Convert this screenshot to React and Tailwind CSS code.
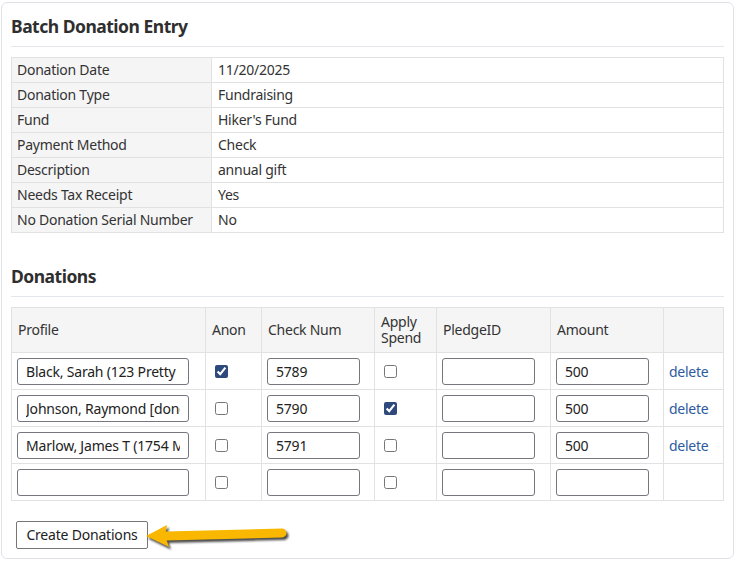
import React from "react";

const info = [
  ["Donation Date", "11/20/2025"],
  ["Donation Type", "Fundraising"],
  ["Fund", "Hiker's Fund"],
  ["Payment Method", "Check"],
  ["Description", "annual gift"],
  ["Needs Tax Receipt", "Yes"],
  ["No Donation Serial Number", "No"],
];

const rows = [
  { profile: "Black, Sarah (123 Pretty Lane, Springfield)", anon: true, check: "5789", spend: false, amount: "500", del: true },
  { profile: "Johnson, Raymond [donor 4412]", anon: false, check: "5790", spend: true, amount: "500", del: true },
  { profile: "Marlow, James T (1754 Maple Street)", anon: false, check: "5791", spend: false, amount: "500", del: true },
  { profile: "", anon: false, check: "", spend: false, amount: "", del: false },
];

const inputCls =
  "h-[27px] border border-[#76767f] rounded-[3px] px-[8px] text-[14px] tracking-[-0.2px] text-[#222] bg-white outline-none";

function Cell({ w, children, className = "" }) {
  return (
    <div className={`${w} shrink-0 border-r border-[#e2e2e2] flex items-center ${className}`}>
      {children}
    </div>
  );
}

function Arrow() {
  return (
    <svg
      className="absolute left-[142px] top-[519px]"
      width="150"
      height="32"
      viewBox="0 0 150 32"
    >
      <defs>
        <filter id="blur" x="-10%" y="-50%" width="120%" height="200%">
          <feGaussianBlur stdDeviation="0.8" />
        </filter>
      </defs>
      <g transform="translate(2,2.5)" fill="#2a2a2a" stroke="#2a2a2a" opacity="0.85" filter="url(#blur)">
        <path d="M22 14 L138 11" strokeWidth="9" strokeLinecap="round" fill="none" />
        <path d="M2 14 L23 3 L21 13.5 L25 25 Z" stroke="none" />
      </g>
      <g fill="#f9b700" stroke="#f9b700">
        <path d="M22 14 L138 11" strokeWidth="9" strokeLinecap="round" fill="none" />
        <path d="M2 14 L23 3 L21 13.5 L25 25 Z" stroke="none" />
      </g>
    </svg>
  );
}

export default function App() {
  return (
    <div
      className="w-[734px] h-[562px] bg-white pt-[2px] pl-[1px] text-[#333]"
      style={{ fontFamily: '"Noto Sans", "Open Sans", sans-serif' }}
    >
      <div className="relative w-[733px] h-[557px] border border-[#dfe3e8] rounded-[6px] px-[9px]">
        <div className="h-[44px] pt-[11px] border-b border-[#e3e7ec]">
          <h2 className="text-[17.5px] leading-[24px] font-bold tracking-[-0.5px] text-[#2f2f2f]">Batch Donation Entry</h2>
        </div>

        <div className="mt-[10px] border-t border-l border-[#e2e2e2] text-[14px] tracking-[-0.25px]">
          {info.map(([k, v]) => (
            <div key={k} className="flex h-[25px] border-b border-[#e2e2e2]">
              <div className="w-[200px] shrink-0 bg-[#f5f5f5] border-r border-[#e2e2e2] flex items-center pl-[5px] leading-[20px]">
                {k}
              </div>
              <div className="flex-1 border-r border-[#e2e2e2] flex items-center pl-[6px] leading-[20px]">
                {v}
              </div>
            </div>
          ))}
        </div>

        <div className="mt-[20px] h-[44px] pt-[11px] border-b border-[#e3e7ec]">
          <h2 className="text-[17.5px] leading-[24px] font-bold tracking-[-0.5px] text-[#2f2f2f]">Donations</h2>
        </div>

        <div className="mt-[10px] border-t border-l border-[#e2e2e2] text-[14px] tracking-[-0.25px]">
          <div className="flex h-[45px] bg-[#f5f5f5] border-b border-[#e2e2e2] leading-[16px]">
            <Cell w="w-[194px]" className="pl-[6px]">Profile</Cell>
            <Cell w="w-[56px]" className="pl-[6px]">Anon</Cell>
            <Cell w="w-[113px]" className="pl-[6px]">Check Num</Cell>
            <Cell w="w-[62px]" className="pl-[6px]">
              <span>
                Apply
                <br />
                Spend
              </span>
            </Cell>
            <Cell w="w-[114px]" className="pl-[6px]">PledgeID</Cell>
            <Cell w="w-[113px]" className="pl-[6px]">Amount</Cell>
            <Cell w="w-[60px]" className="pl-[6px]"></Cell>
          </div>
          {rows.map((r, i) => (
            <div key={i} className="flex h-[37px] border-b border-[#e2e2e2]">
              <Cell w="w-[194px]" className="pl-[5px]">
                <input readOnly value={r.profile} className={`${inputCls} w-[172px]`} />
              </Cell>
              <Cell w="w-[56px]" className="pl-[5px]">
                <input type="checkbox" readOnly checked={r.anon} className="w-[13px] h-[13px] ml-[4px] my-[3px] accent-[#2e4a7d]" />
              </Cell>
              <Cell w="w-[113px]" className="pl-[5px]">
                <input readOnly value={r.check} className={`${inputCls} w-[93px]`} />
              </Cell>
              <Cell w="w-[62px]" className="pl-[5px]">
                <input type="checkbox" readOnly checked={r.spend} className="w-[13px] h-[13px] ml-[4px] my-[3px] accent-[#2e4a7d]" />
              </Cell>
              <Cell w="w-[114px]" className="pl-[5px]">
                <input readOnly value="" className={`${inputCls} w-[93px]`} />
              </Cell>
              <Cell w="w-[113px]" className="pl-[5px]">
                <input readOnly value={r.amount} className={`${inputCls} w-[93px]`} />
              </Cell>
              <Cell w="w-[60px]" className="pl-[5px]">
                {r.del && <a className="text-[#2d5aa0] cursor-pointer">delete</a>}
              </Cell>
            </div>
          ))}
        </div>

        <button className="mt-[20px] ml-[5px] w-[132px] h-[28px] border border-[#767676] rounded-[2px] bg-white text-[14px] tracking-[-0.2px] text-[#222] leading-[20px]">
          Create Donations
        </button>

        <Arrow />
      </div>
    </div>
  );
}
